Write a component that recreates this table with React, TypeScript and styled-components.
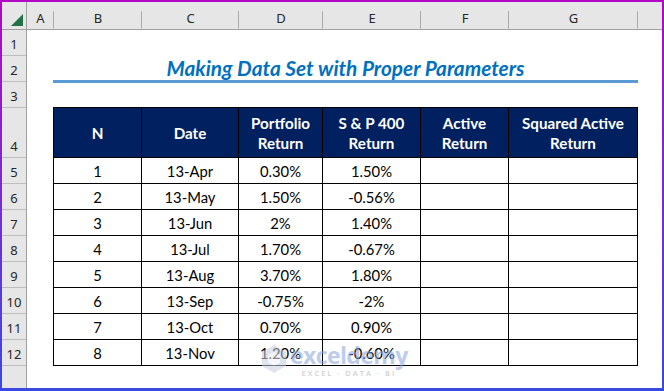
import React, { FC } from 'react';
import styled, { createGlobalStyle } from 'styled-components';

const GlobalStyle = createGlobalStyle`
  * {
    box-sizing: border-box;
  }
  body {
    margin: 0;
    background: #ffffff;
  }
`;

const COLS = [
  { key: 'A', width: 27 },
  { key: 'B', width: 88 },
  { key: 'C', width: 97 },
  { key: 'D', width: 84 },
  { key: 'E', width: 98 },
  { key: 'F', width: 88 },
  { key: 'G', width: 129 },
];

const ROW_HEIGHTS = [26, 26, 26, 50, 26, 26, 26, 26, 26, 26, 26, 26];

const HEADERS = ['N', 'Date', 'Portfolio\nReturn', 'S & P 400\nReturn', 'Active\nReturn', 'Squared Active\nReturn'];

const DATA = [
  ['1', '13-Apr', '0.30%', '1.50%'],
  ['2', '13-May', '1.50%', '-0.56%'],
  ['3', '13-Jun', '2%', '1.40%'],
  ['4', '13-Jul', '1.70%', '-0.67%'],
  ['5', '13-Aug', '3.70%', '1.80%'],
  ['6', '13-Sep', '-0.75%', '-2%'],
  ['7', '13-Oct', '0.70%', '0.90%'],
  ['8', '13-Nov', '1.20%', '-0.60%'],
];

const Frame = styled.div`
  position: relative;
  width: 664px;
  height: 391px;
  display: flex;
  flex-direction: column;
  border-style: solid;
  border-width: 2px 2px 3px 2px;
  border-image: linear-gradient(180deg, #b008c4 0%, #7a2ad2 50%, #3a48e2 100%) 1;
  background: #ffffff;
  overflow: hidden;
`;

const ColumnBar = styled.div`
  display: flex;
  height: 28px;
  flex: none;
  background: #e6e6e6;
  border-bottom: 1px solid #a0a0a0;
`;

const Corner = styled.div`
  position: relative;
  width: 25px;
  flex: none;
  border-right: 1px solid #a0a0a0;
`;

const CornerTriangle = styled.div`
  position: absolute;
  right: 3px;
  bottom: 3px;
  width: 0;
  height: 0;
  border-left: 12px solid transparent;
  border-bottom: 12px solid #217346;
`;

const ColumnLetter = styled.div<{ $w: number }>`
  width: ${({ $w }) => $w}px;
  flex: none;
  display: flex;
  align-items: center;
  justify-content: center;
  padding-top: 5px;
  font-family: 'Noto Sans', 'Open Sans', sans-serif;
  font-size: 13px;
  color: #262626;
  background-image: linear-gradient(#ababab, #ababab);
  background-size: 1px 65%;
  background-position: right bottom;
  background-repeat: no-repeat;
`;

const ColumnRest = styled.div`
  flex: 1;
`;

const Body = styled.div`
  flex: 1;
  display: flex;
  min-height: 0;
`;

const RowHeaders = styled.div`
  width: 25px;
  flex: none;
  display: flex;
  flex-direction: column;
  background: #e6e6e6;
  border-right: 1px solid #a0a0a0;
`;

const RowNumber = styled.div<{ $h: number }>`
  height: ${({ $h }) => $h}px;
  flex: none;
  display: flex;
  align-items: flex-end;
  justify-content: center;
  padding-bottom: 2px;
  border-bottom: 1px solid #bdbdbd;
  font-family: 'Noto Sans', 'Open Sans', sans-serif;
  font-size: 13px;
  color: #262626;
`;

const RowFiller = styled.div`
  flex: 1;
`;

const Sheet = styled.div`
  flex: 1;
  padding-left: 26px;
  display: flex;
  flex-direction: column;
`;

const Title = styled.h1`
  margin: 26px 0 24px 0;
  width: 585px;
  height: 27px;
  border-bottom: 3px solid #5b9bd5;
  font-family: Lato, 'Open Sans', sans-serif;
  font-size: 20.8px;
  font-weight: 700;
  font-style: italic;
  line-height: 24px;
  color: #0070c0;
  text-align: center;
`;

const Table = styled.div`
  display: grid;
  width: 585px;
  grid-template-columns: ${COLS.slice(1).map((c) => `${c.width}px`).join(' ')};
  border-left: 1px solid #000;
  border-top: 1px solid #000;
  font-family: Lato, 'Open Sans', sans-serif;
  font-size: 14.8px;
`;

const HeadCell = styled.div`
  height: 50px;
  display: flex;
  align-items: center;
  justify-content: center;
  text-align: center;
  white-space: pre-line;
  line-height: 20px;
  font-size: 15.2px;
  font-weight: 700;
  color: #ffffff;
  background: #002060;
  border-right: 1px solid #000;
  border-bottom: 1px solid #000;
`;

const Cell = styled.div`
  height: 26px;
  display: flex;
  align-items: center;
  justify-content: center;
  padding-top: 1px;
  color: #000;
  border-right: 1px solid #000;
  border-bottom: 1px solid #000;
`;

const Watermark = styled.div`
  position: absolute;
  left: 258px;
  top: 342px;
  display: flex;
  align-items: flex-start;
  gap: 2px;
  opacity: 0.55;
  pointer-events: none;
`;

const WatermarkText = styled.div`
  display: flex;
  flex-direction: column;
  align-items: center;
`;

const WatermarkName = styled.span`
  font-family: 'Open Sans', sans-serif;
  font-size: 23px;
  font-weight: 700;
  line-height: 23px;
  letter-spacing: -0.6px;
  color: #8aa3dc;
`;

const WatermarkTag = styled.span`
  font-family: 'Open Sans', sans-serif;
  font-size: 7.5px;
  font-weight: 600;
  letter-spacing: 2px;
  color: #a9a9a9;
  margin-top: 1px;
`;

const ExcelDemyIcon: FC = () => (
  <svg width="28" height="30" viewBox="0 0 28 30">
    <path d="M14 1 L26 8 L26 22 L14 29 L2 22 L2 8 Z" fill="#c7cfe2" />
    <path d="M14 8 L20 11.5 L20 18.5 L14 22 L8 18.5 L8 11.5 Z" fill="#eef1f8" />
    <path d="M14 1 L14 8 M26 8 L20 11.5 M2 8 L8 11.5" stroke="#b5bfd8" strokeWidth="1" />
  </svg>
);

export default function App() {
  return (
    <>
      <GlobalStyle />
      <Frame>
        <ColumnBar>
          <Corner>
            <CornerTriangle />
          </Corner>
          {COLS.map((c) => (
            <ColumnLetter key={c.key} $w={c.width}>
              {c.key}
            </ColumnLetter>
          ))}
          <ColumnRest />
        </ColumnBar>
        <Body>
          <RowHeaders>
            {ROW_HEIGHTS.map((h, i) => (
              <RowNumber key={i} $h={h}>
                {i + 1}
              </RowNumber>
            ))}
            <RowFiller />
          </RowHeaders>
          <Sheet>
            <Title>Making Data Set with Proper Parameters</Title>
            <Table>
              {HEADERS.map((h) => (
                <HeadCell key={h}>{h}</HeadCell>
              ))}
              {DATA.map((row) => (
                <React.Fragment key={row[0]}>
                  {row.map((v, j) => (
                    <Cell key={j}>{v}</Cell>
                  ))}
                  <Cell />
                  <Cell />
                </React.Fragment>
              ))}
            </Table>
          </Sheet>
        </Body>
        <Watermark>
          <ExcelDemyIcon />
          <WatermarkText>
            <WatermarkName>exceldemy</WatermarkName>
            <WatermarkTag>EXCEL · DATA · BI</WatermarkTag>
          </WatermarkText>
        </Watermark>
      </Frame>
    </>
  );
}
